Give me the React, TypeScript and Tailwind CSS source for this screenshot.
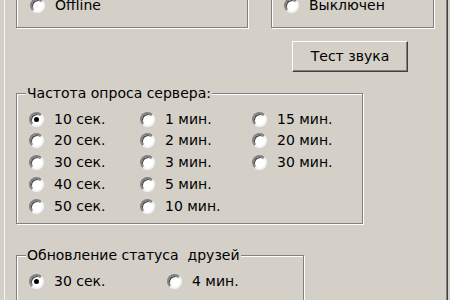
import type { ReactNode } from 'react';

function Radio({ label, checked = false }: { label: string; checked?: boolean }) {
  return (
    <div className="flex items-center h-[22px] gap-[10px] whitespace-nowrap">
      <span className="relative flex items-center justify-center w-[15px] h-[15px] shrink-0 rounded-full bg-white border-2 border-t-[#808080] border-l-[#808080] border-b-[#f4f4f4] border-r-[#f4f4f4] shadow-[inset_1px_1px_0_#404040]">
        {checked && <span className="w-[5px] h-[5px] rounded-full bg-black" />}
      </span>
      <span>{label}</span>
    </div>
  );
}

function GroupBox({
  label,
  className,
  children,
}: {
  label?: string;
  className: string;
  children: ReactNode;
}) {
  return (
    <div
      className={
        'relative shrink-0 border border-[#808080] shadow-[inset_1px_1px_0_#ffffff,1px_1px_0_#ffffff] ' + className
      }
    >
      {label && (
        <span className="absolute left-[9px] top-[-9px] bg-[#d4d0c8] px-[1px] leading-[16px] whitespace-pre">
          {label}
        </span>
      )}
      {children}
    </div>
  );
}

export default function App() {
  return (
    <div className="w-[450px] h-[300px] overflow-hidden flex bg-[#d4d0c8] text-black text-[14px] font-['DejaVu_Sans',sans-serif]">
      <div className="w-[4px] shrink-0" />
      <div className="w-px shrink-0 bg-[#f4f3ef]" />

      <div className="flex-1 flex flex-col pl-[11px]">
        {/* top group boxes, cut off by the window */}
        <div className="flex shrink-0 gap-[23px] -mt-[32px]">
          <GroupBox className="w-[232px] h-[60px] flex flex-col justify-end pl-[13px] pb-[11px]">
            <Radio label="Offline" />
          </GroupBox>
          <GroupBox className="w-[163px] h-[60px] flex flex-col justify-end pl-[12px] pb-[11px]">
            <Radio label="Выключен" />
          </GroupBox>
        </div>

        <button className="self-end shrink-0 mr-[38px] mt-[13px] w-[116px] h-[31px] flex items-center justify-center border border-t-white border-l-white border-b-[#404040] border-r-[#404040] shadow-[inset_-1px_-1px_0_#808080] bg-[#d4d0c8]">
          Тест звука
        </button>

        <GroupBox label="Частота опроса сервера:" className="mt-[21px] w-[347px] h-[131px] pl-[12px] pt-[14px]">
          <div className="grid grid-flow-col grid-rows-[repeat(5,21.75px)] grid-cols-[111px_112px_1fr]">
            <Radio label="10 сек." checked />
            <Radio label="20 сек." />
            <Radio label="30 сек." />
            <Radio label="40 сек." />
            <Radio label="50 сек." />
            <Radio label="1 мин." />
            <Radio label="2 мин." />
            <Radio label="3 мин." />
            <Radio label="5 мин." />
            <Radio label="10 мин." />
            <Radio label="15 мин." />
            <Radio label="20 мин." />
            <Radio label="30 мин." />
          </div>
        </GroupBox>

        <GroupBox label="Обновление статуса  друзей" className="mt-[31px] w-[288px] h-[80px] pl-[12px] pt-[14px]">
          <div className="grid grid-cols-[138px_1fr]">
            <Radio label="30 сек." checked />
            <Radio label="4 мин." />
          </div>
        </GroupBox>
      </div>

      <div className="w-px shrink-0 bg-[#808080]" />
      <div className="w-px shrink-0 bg-[#404040]" />
      <div className="w-[2px] shrink-0" />
    </div>
  );
}
